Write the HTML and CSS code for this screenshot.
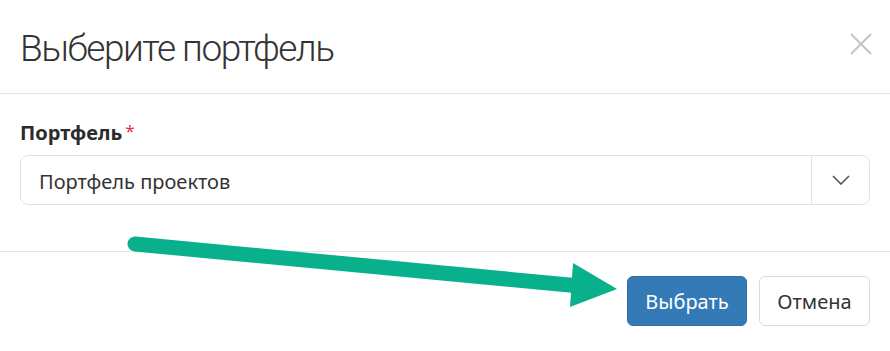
FILE: index.html
```html
<!DOCTYPE html>
<html lang="ru">
<head>
<meta charset="utf-8">
<title>Выберите портфель</title>
<link rel="stylesheet" href="styles.css">
</head>
<body>
<div class="modal">
  <div class="modal-header">
    <h4 class="modal-title">Выберите портфель</h4>
    <button class="close" type="button" aria-label="Закрыть">
      <svg width="22" height="22" viewBox="0 0 22 22"><path d="M1 1 L21 21 M21 1 L1 21" stroke="#c4c4c4" stroke-width="2" fill="none"/></svg>
    </button>
  </div>
  <div class="modal-body">
    <label class="field-label">Портфель<span class="req">*</span></label>
    <div class="select">
      <div class="select-value">Портфель проектов</div>
      <div class="select-arrow">
        <svg width="18" height="10" viewBox="0 0 18 10"><path d="M1 1 L9 9 L17 1" stroke="#555" stroke-width="1.6" fill="none"/></svg>
      </div>
    </div>
  </div>
  <div class="modal-footer">
    <button class="btn btn-primary" type="button">Выбрать</button>
    <button class="btn btn-default" type="button">Отмена</button>
  </div>
  <svg class="annotation" width="890" height="351" viewBox="0 0 890 351">
    <line x1="135" y1="244" x2="580" y2="286" stroke="#09b08c" stroke-width="15" stroke-linecap="round"/>
    <polygon points="573,263 617,289 570,307" fill="#09b08c"/>
  </svg>
</div>
</body>
</html>
```
FILE: styles.css
```css
* { box-sizing: border-box; }
html, body { margin: 0; padding: 0; background: #fff; }
body {
  font-family: "Noto Sans", "Open Sans", "Liberation Sans", sans-serif;
  color: #333;
}
.modal {
  position: relative;
  width: 890px;
  height: 351px;
  background: #fff;
  overflow: hidden;
}
.modal-header {
  height: 94px;
  padding: 0 18px 0 20px;
  border-bottom: 1px solid #e5e5e5;
  display: flex;
  align-items: center;
  justify-content: space-between;
}
.modal-title {
  margin: 3px 0 0 0;
  font-family: Roboto, "Noto Sans", sans-serif;
  font-size: 37px;
  font-weight: 300;
  color: #333;
  letter-spacing: -1.5px;
}
.close {
  background: none;
  border: 0;
  padding: 0;
  width: 22px;
  height: 22px;
  margin-top: -5px;
}
.close svg { display: block; }
.modal-body {
  height: 158px;
  padding: 25px 20px 0 20px;
  border-bottom: 1px solid #e5e5e5;
}
.field-label {
  display: block;
  font-size: 20px;
  font-weight: 700;
  color: #2b2b2b;
  line-height: 28px;
  height: 28px;
  margin-bottom: 8px;
}
.req {
  color: #e03444;
  margin-left: 3px;
  font-weight: 400;
  font-size: 17px;
  line-height: 0;
  position: relative;
  top: -3px;
}
.select {
  display: flex;
  height: 50px;
  border: 1px solid #dfe1e5;
  border-radius: 8px;
}
.select-value {
  flex: 1;
  display: flex;
  align-items: center;
  padding: 2px 0 0 18px;
  font-size: 20px;
  color: #333;
}
.select-arrow {
  width: 58px;
  border-left: 1px solid #dfe1e5;
  display: flex;
  align-items: center;
  justify-content: center;
}
.select-arrow svg { display: block; }
.modal-footer {
  display: flex;
  justify-content: flex-end;
  gap: 12px;
  padding: 24px 20px 0 20px;
}
.btn {
  height: 50px;
  border-radius: 6px;
  font-family: inherit;
  font-size: 20px;
  padding: 0;
  cursor: pointer;
}
.btn-primary {
  background: #337ab7;
  border: 1px solid #2e6fa8;
  color: #fff;
  width: 120px;
}
.btn-default {
  background: #fff;
  border: 1px solid #dcdcdc;
  color: #333;
  width: 111px;
}
.annotation {
  position: absolute;
  left: 0;
  top: 0;
  pointer-events: none;
}
```
